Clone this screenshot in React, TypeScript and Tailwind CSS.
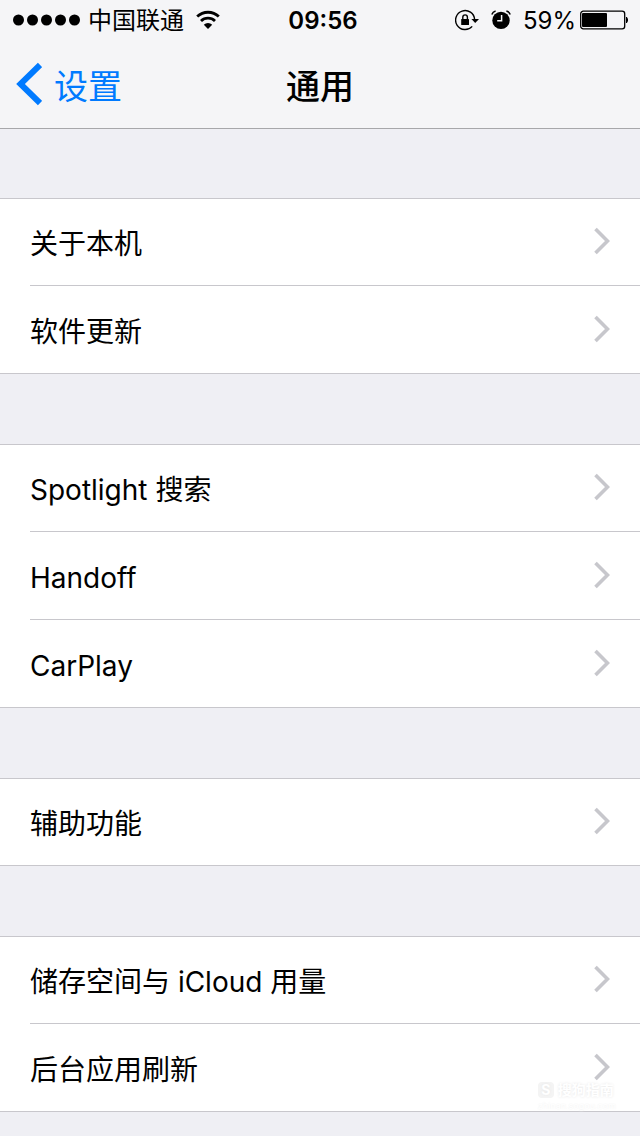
const groups: string[][] = [
  ["关于本机", "软件更新"],
  ["Spotlight 搜索", "Handoff", "CarPlay"],
  ["辅助功能"],
  ["储存空间与 iCloud 用量", "后台应用刷新"],
];

function WifiIcon() {
  return (
    <svg className="ml-3 h-5 w-6" viewBox="0 0 24 20" fill="none" stroke="#000" strokeWidth="2.8">
      <path d="M1.2 6.6a15.6 15.6 0 0 1 21.6 0" />
      <path d="M5 11a10 10 0 0 1 14 0" />
      <path d="M12 19 7.8 14.8a6 6 0 0 1 8.4 0Z" fill="#000" stroke="none" />
    </svg>
  );
}

function RotationLockIcon() {
  return (
    <svg className="h-6 w-6" viewBox="0 0 24 24" fill="none">
      <path d="M19.6 11.5A9.5 9.5 0 1 0 17.2 18.4" stroke="#000" strokeWidth="1.4" />
      <path d="M16.4 11H24l-3.8 4Z" fill="#000" />
      <rect x="6.2" y="11" width="7.8" height="6" rx="0.5" fill="#000" />
      <path d="M7.8 11.5V9.2a2.3 2.3 0 0 1 4.6 0v2.3" stroke="#000" strokeWidth="1.4" />
    </svg>
  );
}

function AlarmIcon() {
  return (
    <svg className="h-5 w-5" viewBox="0 0 20 20" fill="none">
      <circle cx="10" cy="10.4" r="8.7" fill="#000" />
      <path d="M10.6 5v5.8H6.2" stroke="#f5f5f7" strokeWidth="1.5" />
      <path d="M0.8 4.4Q1.8 1.6 4.6 0.9M19.2 4.4q-1-2.8-3.8-3.5" stroke="#000" strokeWidth="1.5" />
    </svg>
  );
}

function BatteryIcon() {
  return (
    <svg className="ml-1 h-5 w-12" viewBox="0 0 48 20" fill="none">
      <rect x="0.7" y="1.2" width="44" height="17.6" rx="2.6" stroke="#000" strokeWidth="1.3" />
      <rect x="2" y="3" width="25" height="14" rx="1" fill="#000" />
      <path d="M46.5 7q2.3 3 0 6Z" fill="#000" stroke="#000" />
    </svg>
  );
}

function StatusBar() {
  return (
    <div className="grid h-10 grid-cols-[1fr_auto_1fr] items-center px-3 text-2xl">
      <div className="flex items-center">
        <svg className="mr-1.5 h-3 w-[70px]" viewBox="0 0 70 12">
          {[0, 1, 2, 3, 4].map((i) => (
            <circle key={i} cx={6.5 + i * 14} cy="6" r="5.5" />
          ))}
        </svg>
        <span className="pt-0.5">中国联通</span>
        <WifiIcon />
      </div>
      <time className="pt-0.5 pl-1.5 font-semibold">09:56</time>
      <div className="flex items-center justify-end">
        <RotationLockIcon />
        <span className="mr-3 ml-3 flex">
          <AlarmIcon />
        </span>
        <span className="pt-0.5">59%</span>
        <BatteryIcon />
      </div>
    </div>
  );
}

function NavBar() {
  return (
    <div className="grid h-22 grid-cols-[1fr_auto_1fr] items-center px-4 text-[34px]">
      <button type="button" className="flex items-center gap-3 text-[#007aff]">
        <svg className="h-11 w-[26px]" viewBox="0 0 26 44" fill="none" stroke="currentColor" strokeWidth="6">
          <path d="M24 3 4.5 22 24 41" />
        </svg>
        <span className="pt-1">设置</span>
      </button>
      <h1 className="pt-1 font-medium">通用</h1>
    </div>
  );
}

function Chevron() {
  return (
    <svg className="h-7 w-4" viewBox="0 0 16 28" fill="none" stroke="#c7c7cc" strokeWidth="3.6">
      <path d="m1.5 2 12 12-12 12" />
    </svg>
  );
}

function SettingsGroup({ items }: { items: string[] }) {
  return (
    <ul className="bg-white">
      {items.map((item) => (
        <li key={item} className="group h-22 border-[#c8c7cc] pl-[30px] first:border-t last:border-b">
          <a
            href="#"
            className="flex h-full items-center justify-between border-b border-[#c8c7cc] pr-[30px] pb-0.5 group-last:border-b-0"
          >
            <span className="pt-1.5">{item}</span>
            <Chevron />
          </a>
        </li>
      ))}
    </ul>
  );
}

function Watermark() {
  return (
    <div className="pointer-events-none absolute right-6 bottom-6 text-white">
      <div className="flex items-center gap-1 text-[14px] leading-5 font-bold [text-shadow:0_0_3px_#e6e6e6]">
        <span className="flex h-4 w-4 items-center justify-center rounded bg-[#f4f4f4]">S</span>
        搜狗指南
      </div>
      <div className="text-[9px] leading-3 [text-shadow:0_0_2px_#ececec]">zhinan.sogou.com</div>
    </div>
  );
}

export default function App() {
  return (
    <div className="relative min-h-screen bg-[#efeff4] font-[Inter,'Noto_Sans_CJK_SC',sans-serif] text-[28px] text-black">
      <header className="bg-[#f5f5f7] shadow-[0_1px_0_#a7a7aa]">
        <StatusBar />
        <NavBar />
      </header>
      <main className="flex flex-col gap-[70px] pt-[70px] pb-6">
        {groups.map((items) => (
          <SettingsGroup key={items[0]} items={items} />
        ))}
      </main>
      <Watermark />
    </div>
  );
}
